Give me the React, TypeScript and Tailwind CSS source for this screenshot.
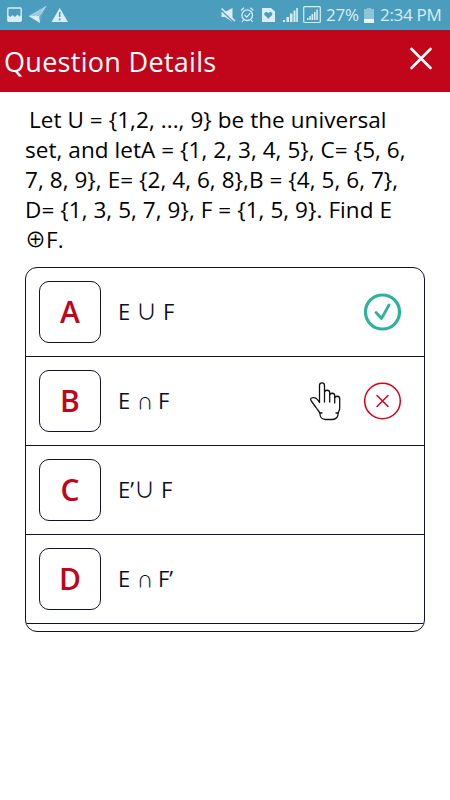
import { clsx } from "clsx";

const lines = [
  { text: "Let U = {1,2, ..., 9} be the universal", className: "pl-1" },
  { text: "set, and letA = {1, 2, 3, 4, 5}, C= {5, 6,", className: "" },
  { text: "7, 8, 9}, E= {2, 4, 6, 8},B = {4, 5, 6, 7},", className: "" },
  { text: "D= {1, 3, 5, 7, 9}, F = {1, 5, 9}. Find E", className: "" },
];

type Status = "correct" | "wrong";

const options: { letter: string; left: string; op: "∪" | "∩"; right: string; status?: Status }[] = [
  { letter: "A", left: "E", op: "∪", right: "F", status: "correct" },
  { letter: "B", left: "E", op: "∩", right: "F", status: "wrong" },
  { letter: "C", left: "E’", op: "∪", right: "F" },
  { letter: "D", left: "E", op: "∩", right: "F’" },
];

function StatusBar() {
  return (
    <div className="flex h-[30px] items-center justify-between bg-[#4a9dbd] pr-[9px] pl-[7px] text-[#d9edf3]">
      <svg width="62" height="30" viewBox="0 0 62 30" fill="none">
        <rect x="0.8" y="8" width="13.4" height="13.2" rx="1" stroke="currentColor" strokeWidth="1.4" />
        <path d="M1 15.500 3.500 17l2-2 2.500 2 2.500-2.500 2 2 2-1.500v6H1z" fill="currentColor" />
        <path d="M39 6 21.500 16l8.500 1.200z" fill="currentColor" opacity="0.6" />
        <path d="M39 6 30 17.200 33 23z" fill="currentColor" opacity="0.15" />
        <path d="M39 6 31.500 17" stroke="currentColor" strokeWidth="0.8" />
        <path d="M21.500 16 33 23l-1-7z" fill="currentColor" />
        <path d="M52.700 8 61 22H44.500z" fill="currentColor" />
        <path d="M52.700 12v5M52.700 18.500v2" stroke="#4a9dbd" strokeWidth="1.600" />
      </svg>
      <div className="flex items-center">
        <svg width="104" height="30" viewBox="220 0 104 30" fill="none">
          <path d="M221.500 12h3.500l7.500-4v14l-7.500-5h-3.500z" fill="currentColor" />
          <path d="m221.500 10.500 12.500 12" stroke="#4a9dbd" strokeWidth="1.200" />
          <path d="m221.500 8.500 13.500 12.500" stroke="currentColor" strokeWidth="1.600" />
          <circle cx="247.200" cy="15.200" r="5.300" stroke="currentColor" strokeWidth="1.300" />
          <path d="m241 10.500 3-2.700M253.400 10.500l-3-2.700M243.500 20l-1.500 2M251 20l1.500 2M244.500 15l2.200 2.200 3.600-4" stroke="currentColor" strokeWidth="1.200" />
          <path d="M262 8h9l4 3.500V22h-13z" fill="currentColor" />
          <path d="M268.300 18.800 264.500 15c-1.300-2 2-4.500 3.800-1.800 1.800-2.700 5.100-.2 3.800 1.800z" fill="#4a9dbd" />
          <path d="M283 22v-2h2V22zM286.500 22v-5h2.500v5zM290 22v-8.500h2.500V22zM293.500 22V10.500h2V22zM296.200 22V8h1.700v14z" fill="currentColor" />
          <rect x="303.700" y="6.700" width="16.600" height="15.800" rx="1" stroke="currentColor" strokeWidth="1.200" />
          <path d="M307 20v-2h1.500v2zM309.300 20v-4h1.500v4zM311.500 20v-6h1.700v6zM314 20v-8h1.500v8zM316.300 20V9.500h1.500V20z" fill="currentColor" />
        </svg>
        <span className="ml-[2px] w-[35px] text-[17px] leading-[30px] tracking-[-0.2px]">27%</span>
        <span className="ml-[3px] flex h-[15px] w-[10px] flex-col">
          <span className="mx-auto h-px w-1 bg-[#8fc4d6]" />
          <span className="h-[10px] bg-[#8fc4d6]" />
          <span className="h-1 bg-[#e9f6f8]" />
        </span>
        <span className="ml-[6px] w-[61px] text-[17px] leading-[30px] whitespace-nowrap tracking-[-0.3px]">2:34 PM</span>
      </div>
    </div>
  );
}

function StatusIcon({ status }: { status: Status }) {
  if (status === "correct") {
    return (
      <svg width="38" height="38" viewBox="0.5 0 38 38" fill="none" stroke="#2db39c" strokeLinecap="round" strokeLinejoin="round">
        <circle cx="19" cy="19" r="17" strokeWidth="3.200" />
        <path d="m12.500 19.500 5.500 6 7.500-13.500" strokeWidth="2.800" />
      </svg>
    );
  }
  return (
    <svg width="38" height="38" viewBox="0.5 0 38 38" fill="none" stroke="#d9001b" strokeLinecap="round">
      <circle cx="19" cy="19" r="17.800" strokeWidth="1.500" />
      <path d="m13.500 13.500 11 11m0-11-11 11" strokeWidth="1.500" />
    </svg>
  );
}

function PointerHand() {
  return (
    <svg width="34" height="40" viewBox="309 381 34 40" fill="none" stroke="#111" strokeWidth="1.300" strokeLinecap="round" strokeLinejoin="round">
      <path d="M319.500 402.500V385.500c0-3.500 5-3.500 5 0V402v-9.500c0-3 5.200-3 5.200 0V402v-6.500c0-3 5-3 5 0v7.500v-4.500c0-3 5-3 5 0V408c0 3-1.700 3.500-1.700 6.500 0 3-3 5-6 5h-6.500c-3.500 0-5.500-2.500-5.500-5.500 0-2-2.500-4-4-6.500l-4-5.500c-1.500-2-2-3.500-.5-4 3-1 6 1 8 4.500" />
      <path d="M320 413h2M336 413h2" />
    </svg>
  );
}

export default function App() {
  return (
    <div className="h-[800px] w-[450px] overflow-hidden bg-white font-['Open_Sans','Noto_Sans',sans-serif]">
      <StatusBar />
      <header className="flex h-[62px] items-center justify-between bg-[#c1051b] pr-[17px] pl-[4px] text-white">
        <h1 className="mt-[2px] text-[27px] leading-[60px] tracking-[0.3px] whitespace-nowrap">Question Details</h1>
        <svg className="mb-1" width="24" height="24" viewBox="0 0 24 24" stroke="currentColor" strokeWidth="2.600" strokeLinecap="round">
          <path d="m2.500 2 19 19m0-19-19 19" />
        </svg>
      </header>

      <main className="px-[25px] pt-[13px]">
        <div className="text-[22.500px] leading-[30px] tracking-[0.06px] whitespace-nowrap text-black">
          {lines.map((line) => (
            <p key={line.text} className={line.className}>
              {line.text}
            </p>
          ))}
          <p className="flex h-[30px]">
            <span className="w-[21px] font-['Noto_Sans_CJK_JP',sans-serif] text-[21px] leading-[27px]">⊕</span>
            <span>F.</span>
          </p>
        </div>

        <ul className="mt-[12px] overflow-hidden rounded-[12px] border border-[#10122e] pb-[7px]">
          {options.map(({ letter, left, op, right, status }) => (
            <li key={letter} className="flex h-[89px] items-center border-b border-[#10122e] pr-[22px] pl-[13px]">
              <span className="flex size-[62px] items-center justify-center rounded-[10px] border border-[#10122e] pb-px text-[30px] font-semibold text-[#c1051b]">
                {letter}
              </span>
              <span className="ml-[17px] flex h-8 items-start text-[22px] leading-[30px] text-[#0b0f2c]">
                <span className={clsx(op === "∩" ? "w-[19px]" : left === "E" ? "w-[18px]" : "w-[16px]")}>{left}</span>
                <span
                  className={clsx(
                    "font-['Noto_Sans_CJK_JP',sans-serif]",
                    op === "∩" ? "w-[21px] text-[16px] leading-[34px]" : "w-[27px] text-[21px] leading-[28px]",
                  )}
                >
                  {op}
                </span>
                <span>{right}</span>
              </span>
              <span className="ml-auto flex items-center gap-[21px]">
                {status === "wrong" && <PointerHand />}
                {status && <StatusIcon status={status} />}
              </span>
            </li>
          ))}
        </ul>
      </main>
    </div>
  );
}
